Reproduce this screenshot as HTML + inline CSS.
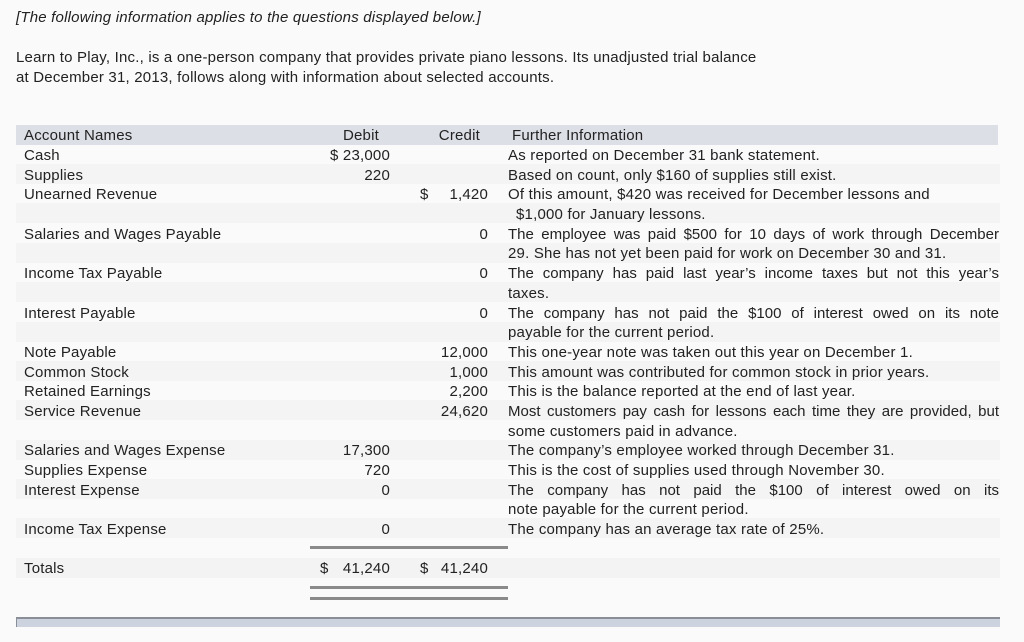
<!DOCTYPE html>
<html><head><meta charset="utf-8"><style>
body{margin:0;width:1024px;height:642px;background:#fafafa;font-family:"Liberation Sans",sans-serif;font-size:15px;letter-spacing:0.2px;color:#222;position:relative;overflow:hidden}
.a{position:absolute;white-space:nowrap;line-height:20px;margin-top:1.5px}
.r{text-align:right}
.j{text-align:justify;text-align-last:justify;letter-spacing:0}
.stripe{position:absolute;left:16px;width:984px;height:20px;background:#f4f4f4}
.bar{position:absolute;background:#8a8a8a;height:3px;left:310px;width:198px}
</style></head><body>
<div class="a" style="left:16px;top:6px;font-style:italic">[The following information applies to the questions displayed below.]</div>
<div class="a" style="left:16px;top:46px">Learn to Play, Inc., is a one-person company that provides private piano lessons. Its unadjusted trial balance</div>
<div class="a" style="left:16px;top:66px">at December 31, 2013, follows along with information about selected accounts.</div>

<div style="position:absolute;left:16px;top:125px;width:982px;height:20px;background:#dcdfe6"></div>
<div class="stripe" style="top:164px"></div>
<div class="stripe" style="top:203px"></div>
<div class="stripe" style="top:243px"></div>
<div class="stripe" style="top:282px"></div>
<div class="stripe" style="top:322px"></div>
<div class="stripe" style="top:361px"></div>
<div class="stripe" style="top:400px"></div>
<div class="stripe" style="top:440px"></div>
<div class="stripe" style="top:479px"></div>
<div class="stripe" style="top:518px"></div>
<div class="stripe" style="top:558px;background:#f3f3f3"></div>

<div class="a" style="left:24px;top:124px">Account Names</div>
<div class="a r" style="left:300px;width:79px;top:124px">Debit</div>
<div class="a r" style="left:400px;width:80px;top:124px">Credit</div>
<div class="a" style="left:512px;top:124px">Further Information</div>

<div class="a" style="left:24px;top:144px">Cash</div>
<div class="a" style="left:24px;top:164px">Supplies</div>
<div class="a" style="left:24px;top:183px">Unearned Revenue</div>
<div class="a" style="left:24px;top:223px">Salaries and Wages Payable</div>
<div class="a" style="left:24px;top:262px">Income Tax Payable</div>
<div class="a" style="left:24px;top:302px">Interest Payable</div>
<div class="a" style="left:24px;top:341px">Note Payable</div>
<div class="a" style="left:24px;top:361px">Common Stock</div>
<div class="a" style="left:24px;top:380px">Retained Earnings</div>
<div class="a" style="left:24px;top:400px">Service Revenue</div>
<div class="a" style="left:24px;top:439px">Salaries and Wages Expense</div>
<div class="a" style="left:24px;top:459px">Supplies Expense</div>
<div class="a" style="left:24px;top:479px">Interest Expense</div>
<div class="a" style="left:24px;top:518px">Income Tax Expense</div>
<div class="a" style="left:24px;top:557px">Totals</div>

<div class="a r" style="left:300px;width:90px;top:144px">$ 23,000</div>
<div class="a r" style="left:300px;width:90px;top:164px">220</div>
<div class="a r" style="left:300px;width:90px;top:439px">17,300</div>
<div class="a r" style="left:300px;width:90px;top:459px">720</div>
<div class="a r" style="left:300px;width:90px;top:479px">0</div>
<div class="a r" style="left:300px;width:90px;top:518px">0</div>
<div class="a" style="left:320px;top:557px">$</div>
<div class="a r" style="left:300px;width:90px;top:557px">41,240</div>

<div class="a" style="left:420px;top:183px">$</div>
<div class="a r" style="left:400px;width:88px;top:183px">1,420</div>
<div class="a r" style="left:400px;width:88px;top:223px">0</div>
<div class="a r" style="left:400px;width:88px;top:262px">0</div>
<div class="a r" style="left:400px;width:88px;top:302px">0</div>
<div class="a r" style="left:400px;width:88px;top:341px">12,000</div>
<div class="a r" style="left:400px;width:88px;top:361px">1,000</div>
<div class="a r" style="left:400px;width:88px;top:380px">2,200</div>
<div class="a r" style="left:400px;width:88px;top:400px">24,620</div>
<div class="a" style="left:420px;top:557px">$</div>
<div class="a r" style="left:400px;width:88px;top:557px">41,240</div>

<div class="a" style="left:508px;top:144px">As reported on December 31 bank statement.</div>
<div class="a" style="left:508px;top:164px">Based on count, only $160 of supplies still exist.</div>
<div class="a" style="left:508px;top:183px">Of this amount, $420 was received for December lessons and</div>
<div class="a" style="left:516px;top:203px">$1,000 for January lessons.</div>
<div class="a j" style="left:508px;width:491px;top:223px">The employee was paid $500 for 10 days of work through December</div>
<div class="a" style="left:508px;top:242px">29. She has not yet been paid for work on December 30 and 31.</div>
<div class="a j" style="left:508px;width:491px;top:262px">The company has paid last year’s income taxes but not this year’s</div>
<div class="a" style="left:508px;top:282px">taxes.</div>
<div class="a j" style="left:508px;width:491px;top:302px">The company has not paid the $100 of interest owed on its note</div>
<div class="a" style="left:508px;top:321px">payable for the current period.</div>
<div class="a" style="left:508px;top:341px">This one-year note was taken out this year on December 1.</div>
<div class="a" style="left:508px;top:361px">This amount was contributed for common stock in prior years.</div>
<div class="a" style="left:508px;top:380px">This is the balance reported at the end of last year.</div>
<div class="a j" style="left:508px;width:491px;top:400px">Most customers pay cash for lessons each time they are provided, but</div>
<div class="a" style="left:508px;top:420px">some customers paid in advance.</div>
<div class="a" style="left:508px;top:439px">The company’s employee worked through December 31.</div>
<div class="a" style="left:508px;top:459px">This is the cost of supplies used through November 30.</div>
<div class="a j" style="left:508px;width:491px;top:479px">The company has not paid the $100 of interest owed on its</div>
<div class="a" style="left:508px;top:498px">note payable for the current period.</div>
<div class="a" style="left:508px;top:518px">The company has an average tax rate of 25%.</div>

<div class="bar" style="top:546px"></div>
<div class="bar" style="top:586px"></div>
<div class="bar" style="top:597px"></div>

<div style="position:absolute;left:16px;top:617px;width:984px;height:10px;background:#cdd3de;border-top:2px solid #8a8e96;border-left:1px solid #8a8e96;box-sizing:border-box"></div>
</body></html>
